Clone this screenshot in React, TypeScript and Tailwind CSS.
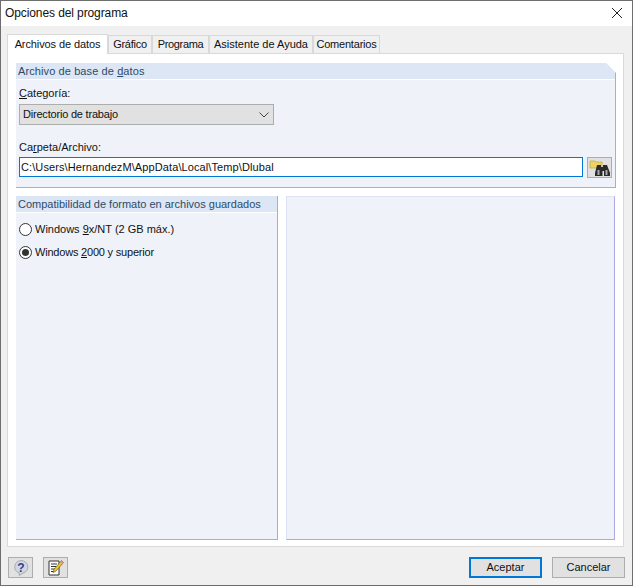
import React from "react";

const U = ({ children }: { children: React.ReactNode }) => <span className="underline underline-offset-[1px] decoration-1">{children}</span>;

function Tab({ children, w, t }: { children: React.ReactNode; w: string; t: string }) {
  return (
    <div className={`${w} ${t} h-[18px] mb-0 border border-b-0 border-[#d9d9d9] bg-[#f0f0f0] flex items-center justify-center whitespace-nowrap text-[11px] text-[#111]`}>
      {children}
    </div>
  );
}

function Header({ children, t }: { children: React.ReactNode; t: string }) {
  return (
    <div className={`h-[16px] bg-[#dce6f4] pl-[2px] flex items-center whitespace-pre text-[11px] text-[#2d4a6a] ${t}`}>
      {children}
    </div>
  );
}

function ChromeBtn({ children, className }: { children: React.ReactNode; className: string }) {
  return <div className={`border border-[#adadad] bg-[#e1e1e1] flex items-center justify-center shrink-0 ${className}`}>{children}</div>;
}

export default function App() {
  return (
    <div className="w-[633px] h-[586px] flex flex-col bg-[#f0f0f0] border-[1px] border-[#6e6e6e] overflow-hidden font-['Liberation_Sans',sans-serif] text-[#111] text-[11px]">
      <div className="h-[25px] shrink-0 bg-white flex items-center justify-between pl-[4px] pr-[9px] pb-[1px]">
        <span className="text-[12px] tracking-[-0.1px] pb-[1px]">Opciones del programa</span>
        <svg width="12" height="12" viewBox="0 0 12 12" fill="none" stroke="#222" strokeWidth="1">
          <path d="M1 1l10 10M11 1L1 11" />
        </svg>
      </div>
      <div className="flex-1 flex flex-col px-[6px] pt-[7px] min-h-0">
        <div className="flex items-end h-[20px] shrink-0 relative z-10">
          <div className="w-[101px] h-[20px] -mb-px border border-b-0 border-[#d9d9d9] bg-white flex items-center justify-center whitespace-nowrap tracking-[-0.1px]">Archivos de datos</div>
          <Tab w="w-[44px]" t="tracking-[-0.25px]">Gráfico</Tab>
          <Tab w="w-[57px]" t="tracking-[-0.35px]">Programa</Tab>
          <Tab w="w-[104px]" t="tracking-[0px]">Asistente de Ayuda</Tab>
          <Tab w="w-[67px]" t="tracking-[-0.2px]">Comentarios</Tab>
        </div>
        <div className="h-[494px] w-[617px] shrink-0 bg-white border border-[#d9d9d9] pt-[9px] px-[8px] pb-[6px] flex flex-col gap-[8px]">
          <div className="h-[125px] shrink-0 w-[600px] bg-[#eff3f9] border-r border-b border-[#aaa8e6] flex flex-col [clip-path:polygon(0_0,calc(100%-10px)_0,100%_10px,100%_100%,0_100%)]">
            <Header t="tracking-[0.1px]">Archivo de base de <U>d</U>atos</Header>
            <div className="px-[3px] pt-[6px] flex flex-col border-t border-white">
              <div className="h-[14px] flex items-center whitespace-pre"><U>C</U>ategoría:</div>
              <div className="mt-[4px] w-[255px] h-[21px] border border-[#adadad] bg-[#e1e1e1] flex items-center justify-between pl-[3px] pr-[4px]">
                <span className="tracking-[-0.2px]">Directorio de trabajo</span>
                <svg width="10" height="6" viewBox="0 0 10 6" fill="none" stroke="#444" strokeWidth="1"><path d="M0.5 0.5l4.5 4.500 4.500-4.500" /></svg>
              </div>
              <div className="mt-[15px] h-[14px] flex items-center whitespace-pre">Ca<U>r</U>peta/Archivo:</div>
              <div className="mt-[3px] flex items-start gap-[4px]">
                <div className="w-[564px] h-[20px] border border-[#0078d7] bg-white flex items-center pl-[1px] tracking-[0.1px]">C:\Users\HernandezM\AppData\Local\Temp\Dlubal</div>
                <ChromeBtn className="w-[25px] h-[21px]">
                  <svg width="22" height="18" viewBox="0 0 22 18">
                    <path d="M1 2h5l1 1h6v6H1z" fill="#f0d264" stroke="#c2a94a" strokeWidth="0.8" />
                    <path d="M8 6h4v2h2V6h4l3 8v3h-6v-5h-1.500v5H6v-3z" fill="#2a2a2a" />
                    <path d="M8.500 11h2v5h-2zM16.500 11h2v5h-2z" fill="#a9a9a9" />
                  </svg>
                </ChromeBtn>
              </div>
            </div>
          </div>
          <div className="flex-1 min-h-0 flex gap-[8px]">
            <div className="w-[262px] bg-[#eff3f9] border-r border-b border-[#aaa8e6] flex flex-col">
              <Header t="tracking-[0px]">Compatibilidad de formato en archivos guardados</Header>
              <div className="border-t border-white px-[3px] pt-[10px] flex flex-col gap-[10px]">
                <div className="flex items-center gap-[3px] h-[13px]">
                  <span className="w-[13px] h-[13px] rounded-full border border-[#333] bg-white shrink-0" />
                  <span className="whitespace-pre">Windows <U>9</U>x/NT (2 GB máx.)</span>
                </div>
                <div className="flex items-center gap-[3px] h-[13px]">
                  <span className="w-[13px] h-[13px] rounded-full border border-[#333] bg-white shrink-0 flex items-center justify-center">
                    <span className="w-[7px] h-[7px] rounded-full bg-[#333]" />
                  </span>
                  <span className="whitespace-pre tracking-[-0.2px]">Windows <U>2</U>000 y superior</span>
                </div>
              </div>
            </div>
            <div className="w-[330px] bg-[#eff3f9] border border-[#dce3f7] border-r-[#aaa8e6] border-b-[#aaa8e6]" />
          </div>
        </div>
        <div className="flex-1 flex items-start pt-[10px] pl-[1px] pr-[1px]">
          <ChromeBtn className="w-[25px] h-[21px]">
            <svg width="18" height="18" viewBox="0 0 18 18">
              <path d="M9 1.500a7 6.500 0 0 1 2 12.700L7 16.500l.5-2.400A7 6.500 0 0 1 9 1.500z" fill="#d3d6de" stroke="#9a9fae" strokeWidth="0.8" />
              <text x="9" y="12.500" textAnchor="middle" fontSize="12" fontWeight="700" fill="#2b3f96" fontFamily="Liberation Sans">?</text>
            </svg>
          </ChromeBtn>
          <ChromeBtn className="w-[25px] h-[21px] ml-[10px]">
            <svg width="18" height="18" viewBox="0 0 18 18">
              <path d="M2 2h10v14H2z" fill="#fff" stroke="#333" strokeWidth="1" />
              <path d="M4 5h6M4 7.500h5M4 10h4M4 12.500h3" stroke="#333" strokeWidth="1" />
              <path d="M14.500 1.500l2 2L9 12l-3 1.500L7 10.500z" fill="#f2c72e" stroke="#6b5a16" strokeWidth="0.7" />
              <path d="M14.500 1.500l2 2-1.200 1.300-2-2z" fill="#e88ba0" />
            </svg>
          </ChromeBtn>
          <div className="ml-auto w-[73px] h-[21px] border-2 border-[#0078d7] bg-[#e1e1e1] flex items-center justify-center">Aceptar</div>
          <ChromeBtn className="w-[73px] h-[21px] ml-[10px]">Cancelar</ChromeBtn>
        </div>
      </div>
    </div>
  );
}
